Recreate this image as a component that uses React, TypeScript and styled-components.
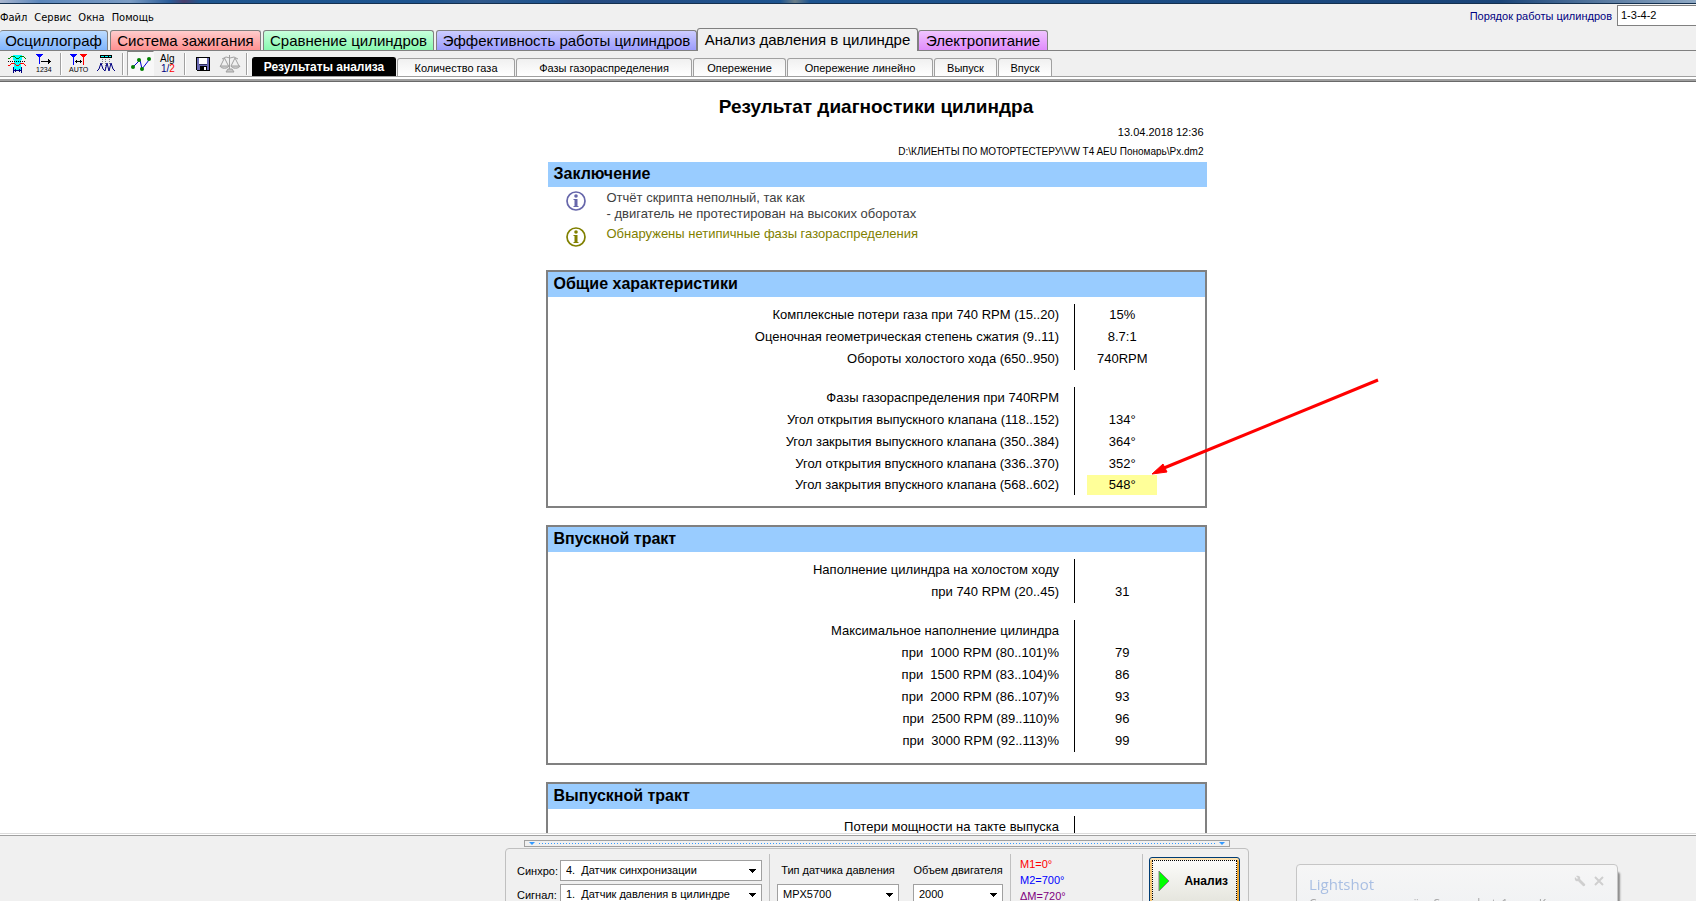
import React from "react";
import styled, { createGlobalStyle, css } from "styled-components";

const GlobalStyle = createGlobalStyle`
  * { box-sizing: border-box; }
  html, body { margin: 0; padding: 0; }
  body {
    background: #f0f0f0;
    color: #000;
    font-family: "Liberation Sans", Arial, sans-serif;
    font-size: 13px;
  }
  button, input, select { font-family: inherit; color: inherit; }
`;

const Window = styled.div`
  display: flex;
  flex-direction: column;
  height: 100vh;
  overflow: hidden;
  background: #f0f0f0;
`;

const TitleStrip = styled.div`
  flex: none;
  height: 4px;
  border-bottom: 1px solid #14304f;
  background: linear-gradient(90deg, #a9b6cf 0, #5b86bb 40px, #7b9cc4 130px, #2a5c98 170px, #4a3f6c 184px, #1f568f 200px,
    #1d5490 420px, #30598c 480px, #1d5490 550px, #274a80 575px, #1d5490 780px, #6d7f88 795px, #1d5490 810px, #1a4478 1500px, #8fa9c4 100%);
`;

const MenuRow = styled.div`
  flex: none;
  display: flex;
  justify-content: space-between;
  height: 24px;
`;

const Menu = styled.nav`
  display: flex;
  gap: 7px;
  padding-top: 6px;
`;

const MenuItem = styled.button`
  height: 16px;
  padding: 0;
  border: 0;
  background: none;
  font-family: "DejaVu Sans Condensed", "Open Sans", sans-serif;
  font-size: 11px;
  line-height: 16px;
`;

const OrderField = styled.label`
  display: flex;
  align-items: center;
  gap: 5px;
  height: 22px;
  padding-top: 1px;
  color: #000080;
  font-size: 11px;
`;

const OrderInput = styled.input`
  width: 79px;
  height: 21px;
  padding: 0 3px 2px;
  border: 1px solid #808080;
  border-right: 0;
  background: #fff;
  color: #000;
  font-size: 11px;
`;

const MainTabs = styled.div`
  flex: none;
  display: flex;
  align-items: flex-end;
  gap: 2px;
  height: 23px;
  border-bottom: 1px solid #808080;
`;

const MainTab = styled.button<{ $width: number; $from: string; $to: string; $active?: boolean }>`
  width: ${(p) => p.$width}px;
  height: 20px;
  padding: 0;
  border: 1px solid #808080;
  border-bottom: 0;
  border-radius: 3px 3px 0 0;
  background: linear-gradient(${(p) => p.$from}, ${(p) => p.$to});
  font-size: 15px;
  line-height: 20px;
  white-space: nowrap;
  &:first-child { border-left: 0; }
  ${(p) =>
    p.$active &&
    css`
      height: 23px;
      margin: 0 -2px -1px;
    `}
`;

const ToolRow = styled.div`
  flex: none;
  display: flex;
  height: 26px;
  padding-left: 3px;
  border-bottom: 1px solid #a0a0a0;
`;

const ToolButton = styled.button<{ $pressed?: boolean }>`
  display: flex;
  align-items: center;
  justify-content: center;
  width: 27px;
  height: 25px;
  padding: 0;
  border: 1px solid transparent;
  background: none;
  ${(p) =>
    p.$pressed &&
    css`
      border-top-color: #808080;
      border-left-color: #a0a0a0;
      background: #f8f8f8;
    `}
`;

const ToolSeparator = styled.span`
  width: 8px;
  padding: 2px 3px 0;
  &::before {
    content: "";
    display: block;
    height: 22px;
    border-left: 1px solid #a0a0a0;
    border-right: 1px solid #fff;
  }
`;

const SubTabs = styled.div`
  display: flex;
  align-items: flex-end;
  gap: 1px;
  padding-left: 1px;
`;

const SubTab = styled.button<{ $active?: boolean; $width: number }>`
  width: ${(p) => p.$width}px;
  height: 18px;
  padding: 0;
  border: 1px solid #a0a0a0;
  border-bottom: 0;
  border-radius: 3px 3px 0 0;
  background: linear-gradient(#f0f0f0, #fff);
  font-size: 11px;
  line-height: 18px;
  white-space: nowrap;
  ${(p) =>
    p.$active &&
    css`
      height: 19px;
      border-color: #000;
      background: #000;
      color: #fff;
      font-size: 12px;
      font-weight: bold;
    `}
`;

const Bevel = styled.div`
  flex: none;
  height: 5px;
  border-top: 2px solid #fff;
  border-bottom: 1px solid #696969;
  background: #a0a0a0;
`;

const Viewport = styled.main`
  flex: 1;
  min-height: 0;
  overflow: hidden;
  padding: 14px 0 0 56px;
  background: #fff;
`;

const Report = styled.article`
  width: 661px;
  margin: 0 auto;
`;

const ReportTitle = styled.h1`
  margin: 0 0 5px;
  font-size: 19px;
  line-height: 22px;
  text-align: center;
`;

const ReportMeta = styled.p<{ $size: number }>`
  margin: 0;
  padding-right: 3px;
  font-size: ${(p) => p.$size}px;
  line-height: 19px;
  text-align: right;
`;

const SectionTitle = styled.h2`
  height: 25px;
  margin: 0;
  padding: 0 6px;
  background: #99ccff;
  font-size: 16px;
  line-height: 23px;
`;

const Conclusion = styled.section`
  margin-top: 1px;
  padding-left: 2px;
`;

const Notes = styled.ul`
  display: flex;
  flex-direction: column;
  gap: 4px;
  margin: 0 0 23px;
  padding: 3px 0 0 18px;
  list-style: none;
`;

const Note = styled.li<{ $color: string; $icon: string }>`
  display: flex;
  gap: 21px;
  color: ${(p) => p.$color};
  line-height: 16px;
  & > svg {
    flex: none;
    margin-top: 1px;
    color: ${(p) => p.$icon};
  }
`;

const Box = styled.section`
  margin-bottom: 17px;
  padding-bottom: 11px;
  border: 2px solid #808080;
`;

const DataTable = styled.table`
  width: 100%;
  margin-top: 7px;
  border-collapse: collapse;
  table-layout: fixed;
  line-height: 20px;
  & + & { margin-top: 17px; }
`;

const LabelCell = styled.th`
  padding: 0 15px 0 0;
  font-weight: normal;
  text-align: right;
  white-space: pre;
`;

const ValueCell = styled.td`
  width: 130px;
  height: 22px;
  padding: 0 35px 0 0;
  border-left: 1px solid #000;
  text-align: center;
`;

const Row = styled.tr<{ $marked?: boolean }>`
  ${(p) =>
    p.$marked &&
    css`
      ${ValueCell} { height: 20px; }
    `}
`;

const Highlight = styled.span`
  position: relative;
  display: block;
  width: 70px;
  margin: 0 auto;
  background: #ffff99;
`;

const ArrowMark = styled.svg`
  position: absolute;
  right: -223px;
  bottom: 18px;
  pointer-events: none;
`;

const Dock = styled.footer`
  flex: none;
  height: 68px;
  overflow: hidden;
  border-top: 1px solid #dcdcdc;
  padding-left: 58px;
  background: linear-gradient(#fff 0 1px, #a0a0a0 1px 2px, #f0f0f0 2px);
`;

const DockInner = styled.div`
  display: flex;
  flex-direction: column;
  align-items: center;
  padding-top: 6px;
`;

const Splitter = styled.div`
  display: flex;
  align-items: center;
  gap: 4px;
  width: 706px;
  height: 7px;
  padding: 0 4px;
  border: 1px solid #a0a0a0;
`;

const Dots = styled.span`
  flex: 1;
  height: 1px;
  background: repeating-linear-gradient(90deg, #3399ff 0 1px, transparent 1px 3px);
`;

const Panel = styled.form`
  display: flex;
  width: 744px;
  height: 90px;
  margin-top: 1px;
  padding: 5px 8px 0 11px;
  border: 1px solid #c0c0c0;
  border-radius: 4px 4px 0 0;
  font-size: 11px;
`;

const Divider = styled.span`
  flex: none;
  width: 1px;
  background: #c0c0c0;
`;

const Sources = styled.div`
  display: grid;
  grid-template-columns: 43px 202px;
  grid-auto-rows: 21px;
  row-gap: 3px;
  align-items: center;
  padding: 6px 7px 0 0;
`;

const Sensors = styled.div`
  display: flex;
  gap: 14px;
  padding: 6px 7px 0;
`;

const Field = styled.div<{ $width: number }>`
  display: flex;
  flex-direction: column;
  gap: 3px;
  width: ${(p) => p.$width}px;
`;

const FieldLabel = styled.label`
  line-height: 21px;
  text-align: center;
  white-space: nowrap;
`;

const SelectWrap = styled.div`
  position: relative;
  height: 21px;
  & > svg {
    position: absolute;
    top: 9px;
    right: 6px;
    pointer-events: none;
  }
`;

const NativeSelect = styled.select`
  appearance: none;
  width: 100%;
  height: 21px;
  padding: 0 16px 1px 5px;
  border: 1px solid #a0a0a0;
  border-radius: 0;
  background: #fff;
  font-size: 11px;
  white-space: pre;
`;

const Markers = styled.ul`
  flex: 1;
  margin: 0;
  padding: 2px 0 0 9px;
  list-style: none;
  line-height: 16px;
`;

const Marker = styled.li<{ $color: string }>`
  color: ${(p) => p.$color};
`;

const RunButton = styled.button`
  display: flex;
  align-items: center;
  justify-content: space-between;
  flex: none;
  width: 91px;
  height: 48px;
  margin: 3px 0 0 6px;
  padding: 0 11px 0 8px;
  border: 1px solid #003c74;
  border-radius: 3px;
  outline: 1px dotted #000;
  outline-offset: -4px;
  background: linear-gradient(#fdfdfb, #e4e4dc);
  box-shadow: inset 0 2px #fde2b0, inset -2px 0 #f0a830, inset 2px 0 #f8c878;
  font-size: 12px;
  font-weight: bold;
`;

const Toast = styled.aside`
  position: fixed;
  right: 78px;
  bottom: -40px;
  width: 322px;
  height: 77px;
  padding: 8px 12px;
  border: 1px solid #c6c6c6;
  border-radius: 4px;
  background: linear-gradient(#f6f6f6, #eceff2);
  box-shadow: 3px 7px 2px -1px #8c8c8c;
  color: #a8a8a8;
  font-family: "Open Sans", "Noto Sans", sans-serif;
  font-size: 12px;
  line-height: 18px;
`;

const ToastHead = styled.div`
  display: flex;
  align-items: center;
  gap: 8px;
  height: 22px;
  padding-right: 1px;
`;

const ToastTitle = styled.strong`
  flex: 1;
  color: #a9bfe3;
  font-size: 15px;
  font-weight: normal;
`;

const ToastButton = styled.button`
  display: flex;
  padding: 0 0 6px;
  border: 0;
  background: none;
`;

const Caret = () => (
  <svg width="7" height="4" viewBox="0 0 7 4" shapeRendering="crispEdges">
    <path d="M0 0h7v1h-1v1h-1v1h-1v1h-1v-1h-1v-1h-1v-1h-1z" />
  </svg>
);

const SplitCaret = () => (
  <svg width="6" height="3" viewBox="0 0 6 3">
    <path d="M0 0h6L3 3z" fill="#3399ff" />
  </svg>
);

const InfoIcon = () => (
  <svg width="20" height="20" viewBox="0 0 20 20">
    <circle cx="10" cy="10" r="9" fill="none" stroke="currentColor" strokeWidth="1.700" />
    <circle cx="10" cy="5" r="1.800" fill="currentColor" />
    <path d="M7.500 8h4v7h1v1h-5v-1h1V9h-1z" fill="currentColor" />
  </svg>
);

const IconSvg = ({ children }: { children: React.ReactNode }) => (
  <svg width="22" height="22" viewBox="0 0 22 22" fill="none" shapeRendering="crispEdges">
    {children}
  </svg>
);

const PhaseIcon = () => (
  <IconSvg>
    <path d="M7 2h9v5h-1v7h1v4H7v-4h1V7H7z" fill="#00ffff" />
    <path d="M2 5.500h2M4 4.500h1M5 3.500h4M9 4.500h1M10 5.500h3M13 4.500h1M14 3.500h4M18 4.500h1M19 5.500h1" stroke="#008000" />
    <path d="M2 8.500h18" stroke="#000" strokeDasharray="1 1" />
    <path d="M2 12.500h2M4 11.500h1M5 10.500h4M9 11.500h1M10 12.500h3M13 11.500h1M14 10.500h4M18 11.500h1M19 12.500h1" stroke="#ff0000" />
    <path d="M7.500 14v6M15.500 14v6M8 17.500h7M9.500 16v3M13.500 16v3" stroke="#000080" />
  </IconSvg>
);

const NumberIcon = () => (
  <IconSvg>
    <path d="M3 1h7v1H9v1H8v1H7v7H6V4H5V3H4V2H3z" fill="#0000ff" />
    <path d="M8 8.500h10M15.500 6v5M16.500 7v3" stroke="#000" />
    <text x="3" y="19" fontSize="7" fill="#000">1234</text>
  </IconSvg>
);

const AutoIcon = () => (
  <IconSvg>
    <path d="M2 1h7v1H8v1H7v1H6v8H5V4H4V3H3V2H2z" fill="#0000ff" />
    <path d="M12 1h7v1h-1v1h-1v1h-1v8h-1V4h-1V3h-1V2h-1z" fill="#ff0000" />
    <path d="M7 8.500h7M8.500 7v3M12.500 7v3" stroke="#000" />
    <text x="1" y="19" fontSize="7" fill="#000">AUTO</text>
  </IconSvg>
);

const WaveIcon = () => (
  <IconSvg>
    <path d="M5.500 2.500h11v2h-11z" fill="#00ffff" stroke="#000" />
    <path d="M9.500 2v3M13.500 2v3" stroke="#000" />
    <path d="M7.500 6v5M10.500 6v9M14.500 6v5" stroke="#808080" strokeDasharray="1 1" />
    <path d="M2 18l2-2 2-6 2 6 2 2 2-8 2 8 2-8 2 6 2 2" stroke="#000080" shapeRendering="auto" />
  </IconSvg>
);

const GraphIcon = () => (
  <IconSvg>
    <path d="M3 14l7-7 2 9 7-9" stroke="#0000d0" shapeRendering="auto" />
    <g fill="#008000" shapeRendering="auto">
      <circle cx="3" cy="14" r="2" />
      <circle cx="9" cy="7" r="2" />
      <circle cx="12" cy="16" r="2" />
      <circle cx="19" cy="6" r="2" />
    </g>
  </IconSvg>
);

const AlgIcon = () => (
  <IconSvg>
    <g fontSize="10" fill="#000">
      <text x="3" y="9">Alg</text>
      <text x="4" y="19" fill="#000080">1/<tspan fill="#ff0000">2</tspan></text>
    </g>
  </IconSvg>
);

const SaveIcon = () => (
  <IconSvg>
    <path d="M4.500 4.500h13v13h-12l-1-1z" fill="#6a6ab4" stroke="#000" />
    <path d="M7 5h8v6H7z" fill="#fff" />
    <path d="M7 11h8v1H7z" fill="#303060" />
    <path d="M8 13h7v5H8z" fill="#000" />
    <path d="M12 14h2v3h-2z" fill="#fff" />
  </IconSvg>
);

const ScalesIcon = () => (
  <IconSvg>
    <g stroke="#a0a0a0" shapeRendering="auto">
      <path d="M10.500 2v14M3 6l4-2 4 1 4-1 4 2M5.500 5l-4 8M5.500 5l4 8M16 5l-4 8M16 5l4 8" />
      <path d="M1 13h9c-1 3-8 3-9 0zM12 13h9c-1 3-8 3-9 0z" fill="#d0d0d0" />
      <path d="M7 19h8l-2-3h-4z" fill="#c8c8c8" />
    </g>
  </IconSvg>
);

const tools = [
  [
    { name: "Фазы", icon: <PhaseIcon /> },
    { name: "Нумерация", icon: <NumberIcon /> },
  ],
  [
    { name: "Авто", icon: <AutoIcon /> },
    { name: "Осциллограмма", icon: <WaveIcon /> },
  ],
  [
    { name: "График", icon: <GraphIcon />, pressed: true },
    { name: "Алгоритм", icon: <AlgIcon /> },
  ],
  [
    { name: "Сохранить", icon: <SaveIcon /> },
    { name: "Сравнить", icon: <ScalesIcon /> },
  ],
];

const mainTabs = [
  { name: "Осциллограф", width: 108, from: "#bcdcff", to: "#80b4fc" },
  { name: "Система зажигания", width: 151, from: "#ffcccc", to: "#ff9090" },
  { name: "Сравнение цилиндров", width: 171, from: "#c8ffdc", to: "#88f8b0" },
  { name: "Эффективность работы цилиндров", width: 261, from: "#ccccff", to: "#9c9cfc" },
  { name: "Анализ давления в цилиндре", width: 221, from: "#f0f0f0", to: "#f0f0f0", active: true },
  { name: "Электропитание", width: 130, from: "#f0c4ff", to: "#e08cfc" },
];

const subTabs = [
  { name: "Результаты анализа", width: 144, active: true },
  { name: "Количество газа", width: 118 },
  { name: "Фазы газораспределения", width: 176 },
  { name: "Опережение", width: 93 },
  { name: "Опережение линейно", width: 146 },
  { name: "Выпуск", width: 63 },
  { name: "Впуск", width: 54 },
];

type DataRow = { label: string; value?: string; marked?: boolean };

const sections: { title: string; groups: DataRow[][] }[] = [
  {
    title: "Общие характеристики",
    groups: [
      [
        { label: "Комплексные потери газа при 740 RPM (15..20)", value: "15%" },
        { label: "Оценочная геометрическая степень сжатия (9..11)", value: "8.7:1" },
        { label: "Обороты холостого хода (650..950)", value: "740RPM" },
      ],
      [
        { label: "Фазы газораспределения при 740RPM" },
        { label: "Угол открытия выпускного клапана (118..152)", value: "134°" },
        { label: "Угол закрытия выпускного клапана (350..384)", value: "364°" },
        { label: "Угол открытия впускного клапана (336..370)", value: "352°" },
        { label: "Угол закрытия впускного клапана (568..602)", value: "548°", marked: true },
      ],
    ],
  },
  {
    title: "Впускной тракт",
    groups: [
      [
        { label: "Наполнение цилиндра на холостом ходу" },
        { label: "при 740 RPM (20..45)", value: "31" },
      ],
      [
        { label: "Максимальное наполнение цилиндра" },
        { label: "при  1000 RPM (80..101)%", value: "79" },
        { label: "при  1500 RPM (83..104)%", value: "86" },
        { label: "при  2000 RPM (86..107)%", value: "93" },
        { label: "при  2500 RPM (89..110)%", value: "96" },
        { label: "при  3000 RPM (92..113)%", value: "99" },
      ],
    ],
  },
  {
    title: "Выпускной тракт",
    groups: [[{ label: "Потери мощности на такте выпуска" }]],
  },
];

const Dropdown = ({ id, value }: { id: string; value: string }) => (
  <SelectWrap>
    <NativeSelect id={id} defaultValue={value}>
      <option value={value}>{value}</option>
    </NativeSelect>
    <Caret />
  </SelectWrap>
);

const PointerArrow = () => (
  <ArrowMark width="230" height="100" viewBox="0 0 230 100">
    <path d="M228 3L14 91" stroke="#ff0000" strokeWidth="3" />
    <path d="M2 97L13 87L17 95z" fill="#ff0000" stroke="#ff0000" />
  </ArrowMark>
);

export default function App() {
  return (
    <Window>
      <GlobalStyle />
      <TitleStrip />
      <MenuRow>
        <Menu>
          {["Файл", "Сервис", "Окна", "Помощь"].map((m) => (
            <MenuItem key={m}>{m}</MenuItem>
          ))}
        </Menu>
        <OrderField>
          Порядок работы цилиндров
          <OrderInput defaultValue="1-3-4-2" />
        </OrderField>
      </MenuRow>
      <MainTabs role="tablist">
        {mainTabs.map((t) => (
          <MainTab
            key={t.name}
            role="tab"
            aria-selected={!!t.active}
            $width={t.width}
            $from={t.from}
            $to={t.to}
            $active={t.active}
          >
            {t.name}
          </MainTab>
        ))}
      </MainTabs>
      <ToolRow>
        {tools.map((group, i) => (
          <React.Fragment key={i}>
            {group.map((t) => (
              <ToolButton key={t.name} aria-label={t.name} $pressed={"pressed" in t}>
                {t.icon}
              </ToolButton>
            ))}
            <ToolSeparator />
          </React.Fragment>
        ))}
        <SubTabs role="tablist">
          {subTabs.map((t) => (
            <SubTab key={t.name} role="tab" aria-selected={!!t.active} $width={t.width} $active={t.active}>
              {t.name}
            </SubTab>
          ))}
        </SubTabs>
      </ToolRow>
      <Bevel />
      <Viewport>
        <Report>
          <ReportTitle>Результат диагностики цилиндра</ReportTitle>
          <ReportMeta $size={11}>13.04.2018 12:36</ReportMeta>
          <ReportMeta $size={10}>D:\КЛИЕНТЫ ПО МОТОРТЕСТЕРУ\VW T4 AEU Пономарь\Px.dm2</ReportMeta>
          <Conclusion>
            <SectionTitle>Заключение</SectionTitle>
            <Notes>
              <Note $color="#404040" $icon="#6666aa">
                <InfoIcon />
                <span>
                  Отчёт скрипта неполный, так как
                  <br />- двигатель не протестирован на высоких оборотах
                </span>
              </Note>
              <Note $color="#808000" $icon="#808000">
                <InfoIcon />
                <span>Обнаружены нетипичные фазы газораспределения</span>
              </Note>
            </Notes>
          </Conclusion>
          {sections.map((s) => (
            <Box key={s.title}>
              <SectionTitle>{s.title}</SectionTitle>
              {s.groups.map((rows, i) => (
                <DataTable key={i}>
                  <tbody>
                    {rows.map((r) => (
                      <Row key={r.label} $marked={r.marked}>
                        <LabelCell scope="row">{r.label}</LabelCell>
                        <ValueCell>
                          {r.marked ? (
                            <Highlight>
                              {r.value}
                              <PointerArrow />
                            </Highlight>
                          ) : (
                            r.value
                          )}
                        </ValueCell>
                      </Row>
                    ))}
                  </tbody>
                </DataTable>
              ))}
            </Box>
          ))}
        </Report>
      </Viewport>
      <Dock>
        <DockInner>
          <Splitter>
            <SplitCaret />
            <Dots />
            <SplitCaret />
          </Splitter>
          <Panel onSubmit={(e) => e.preventDefault()}>
            <Sources>
              <label htmlFor="sync">Синхро:</label>
              <Dropdown id="sync" value={"4.\u00a0\u00a0Датчик синхронизации"} />
              <label htmlFor="signal">Сигнал:</label>
              <Dropdown id="signal" value={"1.\u00a0\u00a0Датчик давления в цилиндре"} />
            </Sources>
            <Divider />
            <Sensors>
              <Field $width={122}>
                <FieldLabel htmlFor="sensor">Тип датчика давления</FieldLabel>
                <Dropdown id="sensor" value="MPX5700" />
              </Field>
              <Field $width={90}>
                <FieldLabel htmlFor="volume">Объем двигателя</FieldLabel>
                <Dropdown id="volume" value="2000" />
              </Field>
            </Sensors>
            <Divider />
            <Markers>
              <Marker $color="#ff0000">M1=0°</Marker>
              <Marker $color="#0000ff">M2=700°</Marker>
              <Marker $color="#800080">ΔM=720°</Marker>
            </Markers>
            <Divider />
            <RunButton type="submit">
              <svg width="12" height="20" viewBox="0 0 12 20">
                <path d="M1 0L11 10L1 20z" fill="#00ff00" stroke="#808080" />
              </svg>
              Анализ
            </RunButton>
          </Panel>
        </DockInner>
      </Dock>
      <Toast>
        <ToastHead>
          <ToastTitle>Lightshot</ToastTitle>
          <ToastButton aria-label="Настройки">
            <svg width="12" height="12" viewBox="0 0 12 12">
              <path d="M1 2l2 2 1-1-2-2c3-1 5 1 4 3l5 5c1 1-1 3-2 2L4 6C2 7 0 5 1 2z" fill="#cfcfcf" />
            </svg>
          </ToastButton>
          <ToastButton aria-label="Закрыть">
            <svg width="10" height="10" viewBox="0 0 10 10">
              <path d="M1 1l8 8M9 1L1 9" stroke="#cfcfcf" strokeWidth="2" />
            </svg>
          </ToastButton>
        </ToastHead>
        <div>Скриншот сохранён: Screenshot_1.png. К...</div>
      </Toast>
    </Window>
  );
}
